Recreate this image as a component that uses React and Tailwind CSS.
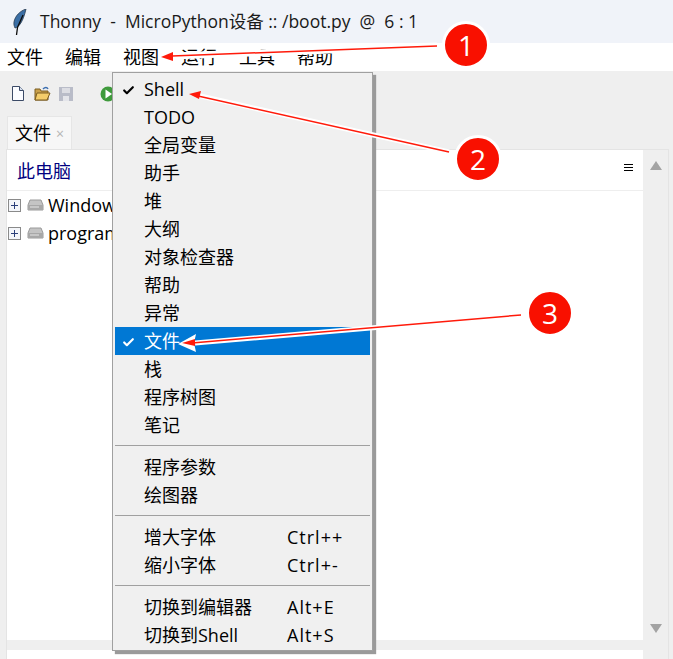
import React from 'react';
import { Check } from 'lucide-react';

const FONT = "font-['Open_Sans','Noto_Sans_CJK_SC',sans-serif]";

const ITEMS_1 = ['Shell', 'TODO', '全局变量', '助手', '堆', '大纲', '对象检查器', '帮助', '异常', '文件', '栈', '程序树图', '笔记'];
const ITEMS_2 = ['程序参数', '绘图器'];
const ITEMS_3 = [['增大字体', 'Ctrl++'], ['缩小字体', 'Ctrl+-']];
const ITEMS_4 = [['切换到编辑器', 'Alt+E'], ['切换到Shell', 'Alt+S']];

function MenuRow({ label, shortcut, checked, active }) {
  return (
    <div className={`relative flex h-[28.05px] items-center pl-[29px] text-[18px] ${active ? 'bg-[#0078d4] text-white' : 'text-black'}`}>
      {checked && <Check size={13} strokeWidth={4} className="absolute left-[7px] top-[9px]" />}
      <span className="w-[143px] shrink-0 whitespace-nowrap">{label}</span>
      {shortcut && <span className="tracking-[1px]">{shortcut}</span>}
    </div>
  );
}

function Sep() {
  return <div className="mb-[8px] mt-[5px] h-px bg-[#a0a0a0]" />;
}

function Callout({ n, className }) {
  return (
    <div className={`absolute flex h-[48px] w-[48px] items-center justify-center rounded-full border-[3px] border-white bg-[#f91000] text-[28px] text-white ${className}`}>
      {n}
    </div>
  );
}

function DriveRow({ label }) {
  return (
    <div className="flex h-[28px] items-center pl-[1px] text-[18px] text-black">
      <div className="relative h-[13px] w-[13px] border border-[#8a8a8a] bg-[#f4f6fa]">
        <div className="absolute left-[2px] top-[5px] h-px w-[7px] bg-[#2a3f7a]" />
        <div className="absolute left-[5px] top-[2px] h-[7px] w-px bg-[#2a3f7a]" />
      </div>
      <svg width="17" height="12" viewBox="0 0 17 12" className="ml-[6px]">
        <path d="M3 1h11l2 5v5H1V6z" fill="#c4c4c4" stroke="#9a9a9a" />
        <path d="M1 6h15v5H1z" fill="#a8a8a8" />
        <path d="M3 8h9" stroke="#e6e6e6" />
      </svg>
      <span className="ml-[4px]">{label}</span>
    </div>
  );
}

export default function App() {
  return (
    <div className={`relative h-[659px] w-[673px] overflow-hidden bg-[#efefef] ${FONT}`}>
      {/* title bar */}
      <div className="flex h-[43px] items-center bg-[#f0f3f9] pl-[13px] text-[17.5px] text-[#1a1a1a]">
        <svg width="14" height="26" viewBox="0 0 14 26">
          <path d="M13 0C7 2 2 7 1 13c-.4 2.500.2 4 1 6 4-1 8-6 11-19z" fill="#3a6ea5" stroke="#26384f" strokeWidth=".8" />
          <path d="M10 6 4.500 18.500 3.500 26" stroke="#0c0c0c" strokeWidth="1.300" fill="none" />
        </svg>
        <span className="ml-[13px] whitespace-pre">Thonny  -  MicroPython设备 :: /boot.py  @  6 : 1</span>
      </div>

      {/* menu bar */}
      <div className="flex h-[28px] items-center gap-[22px] bg-white pl-[7px] text-[18px] text-black">
        <span>文件</span>
        <span>编辑</span>
        <span>视图</span>
        <span>运行</span>
        <span>工具</span>
        <span>帮助</span>
      </div>

      {/* toolbar */}
      <div className="flex h-[45px] items-center pl-[12px]">
        <svg width="12" height="15" viewBox="0 0 12 15">
          <path d="M.5.500h7l4 4v10H.500z" fill="#fbfcff" stroke="#3b4a66" />
          <path d="M7.500.500v4h4" fill="#d7e0ee" stroke="#3b4a66" />
        </svg>
        <svg width="17" height="15" viewBox="0 0 17 15" className="ml-[10px]">
          <path d="M1 3h5l1 2h7v9H1z" fill="#c9a04a" stroke="#7a5c20" />
          <path d="M3 7h13l-3 7H1z" fill="#f4cd6a" stroke="#7a5c20" />
          <path d="M9 3c2-2 4-2 5 0" fill="none" stroke="#3d6fb0" strokeWidth="1.500" />
        </svg>
        <svg width="14" height="14" viewBox="0 0 14 14" className="ml-[8px]">
          <path d="M0 0h14v14H0z" fill="#b9bcc8" />
          <path d="M3 1h8v5H3z" fill="#dcdde3" />
          <path d="M4 9h6v5H4z" fill="#e4e5ea" />
        </svg>
        <svg width="16" height="16" viewBox="0 0 16 16" className="ml-[27px]">
          <circle cx="8" cy="8" r="7.500" fill="#3f9a3c" />
          <path d="M5.500 3.500 12 8l-6.500 4.500z" fill="#fff" />
        </svg>
      </div>

      {/* left panel: files */}
      <div className="ml-[7px] flex h-[33px] w-[65px] items-center border-x border-t border-[#e6e6e6] bg-[#f7f7f7] pl-[7px] text-[18px] text-black">
        文件
        <span className="ml-[5px] text-[14px] text-[#b5b5b5]">×</span>
      </div>
      <div className="ml-[6px] mr-[4px] flex h-[510px] border-x border-t border-[#e4e4e4]">
        <div className="flex flex-1 flex-col">
          <div className="flex-1 bg-white">
            <div className="flex h-[41px] items-center justify-between border-b border-[#eeeeee] pb-[7px] pl-[10px] pr-[10px] pt-[2px] text-[18px] text-[#000080]">
              <span className="mt-[7px]">此电脑</span>
              <div className="flex w-[9px] flex-col gap-[2px]">
                <div className="h-px bg-black" />
                <div className="h-px bg-black" />
                <div className="h-px bg-black" />
              </div>
            </div>
            <DriveRow label="Windows" />
            <DriveRow label="programs" />
          </div>
          <div className="h-[10px]" />
          <div className="h-[9px] bg-white" />
        </div>
        <div className="flex w-[25px] flex-col items-center bg-[#efefef] pt-[11px]">
          <svg width="12" height="9" viewBox="0 0 12 9"><path d="M6 0l6 9H0z" fill="#a3a3a3" /></svg>
          <svg width="12" height="9" viewBox="0 0 12 9" className="mt-[454px]"><path d="M0 0h12L6 9z" fill="#a3a3a3" /></svg>
        </div>
      </div>

      {/* open menu */}
      <div className="absolute left-[112px] top-[72px] w-[261px] border border-[#a0a0a0] bg-[#f0f0f0] px-[2px] pt-[2px] shadow-[3px_3px_1px_#9a9a9a]">
        {ITEMS_1.map((label) => (
          <MenuRow key={label} label={label} checked={label === 'Shell' || label === '文件'} active={label === '文件'} />
        ))}
        <Sep />
        {ITEMS_2.map((label) => <MenuRow key={label} label={label} />)}
        <Sep />
        {ITEMS_3.map(([label, shortcut]) => <MenuRow key={label} label={label} shortcut={shortcut} />)}
        <Sep />
        {ITEMS_4.map(([label, shortcut]) => <MenuRow key={label} label={label} shortcut={shortcut} />)}
      </div>

      {/* annotation arrows */}
      <svg width="673" height="659" viewBox="0 0 673 659" className="pointer-events-none absolute left-0 top-0">
        <path d="M437 46 172 56" stroke="#fff" strokeWidth="7" fill="none" />
        <path d="M437 46 172 56" stroke="#ff1a0a" strokeWidth="1.500" fill="none" />
        <path d="M161 57l12-5 0 9z" fill="#ff1a0a" />
        <path d="M449 152 196 95" stroke="#fff" strokeWidth="5" fill="none" />
        <path d="M449 152 198 96" stroke="#ff1a0a" strokeWidth="1.500" fill="none" />
        <path d="M189 94l12-3-2 8z" fill="#ff1a0a" />
        <path d="M521 315 195 343" stroke="#fff" strokeWidth="5" fill="none" />
        <path d="M178 344l18-10-2 9 2 9z" fill="#fff" />
        <path d="M521 315 192 343" stroke="#ff1a0a" strokeWidth="1.500" fill="none" />
        <path d="M182 343l13-4 0 7z" fill="#ff1a0a" />
      </svg>
      <Callout n="1" className="left-[442px] top-[21px]" />
      <Callout n="2" className="left-[454px] top-[135px]" />
      <Callout n="3" className="left-[526px] top-[289px]" />
    </div>
  );
}
